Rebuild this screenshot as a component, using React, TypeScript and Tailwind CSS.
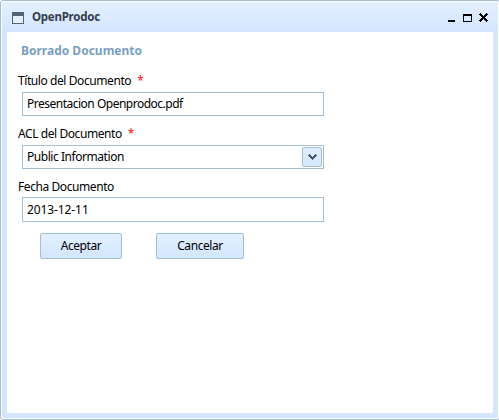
import type { ReactNode } from "react";

function Label({ children, required = false, className }: { children: string; required?: boolean; className: string }) {
  return (
    <div className={`flex h-4 items-center gap-[6px] pl-[11px] leading-4 tracking-[-0.42px] ${className}`}>
      <span>{children}</span>
      {required && <RequiredMark />}
    </div>
  );
}

function RequiredMark() {
  return <span className="font-['Open_Sans',sans-serif] text-[12px] leading-4 text-[#ff0000]">*</span>;
}

function Field({ children, className }: { children: ReactNode; className: string }) {
  return (
    <div className={`ml-[15px] flex w-[302px] items-center justify-between border border-[#a4bed4] bg-white pr-px pl-1 ${className}`}>
      {children}
    </div>
  );
}

function Button({ children, className }: { children: string; className: string }) {
  return (
    <button className={`h-[26px] rounded-[2px] border border-[#a4bed4] bg-linear-to-b from-[#e2efff] to-[#d3e7ff] tracking-[-0.42px] ${className}`}>
      {children}
    </button>
  );
}

export default function App() {
  return (
    <div className="h-[420px] w-[499px] overflow-hidden bg-white font-['Noto_Sans','Open_Sans',sans-serif] text-[12px] text-black">
      <div className="flex h-[420px] w-[500px] flex-col rounded-[3px] border border-[#a4bed4] p-px">
        <div className="flex grow flex-col rounded-[2px] bg-[#d3e5ff] px-[5px] pb-[5px]">
          <header className="-mx-[5px] flex h-[30px] shrink-0 items-center rounded-t-[2px] bg-linear-to-b from-[#e4f0ff] to-[#d3e5ff] pr-[10px] pl-[10px]">
            <svg width="12" height="12" viewBox="0 0 12 12" className="mt-[2px]" shapeRendering="crispEdges">
              <path d="M0 0h12v12H0z" fill="#566471" />
              <path d="M1 4h10v7H1z" fill="#e6f0fc" />
            </svg>
            <span className="ml-2 text-[11.5px] font-bold leading-4 tracking-[-0.25px] text-[#34404b]">OpenProdoc</span>
            <svg width="40" height="10" viewBox="0 0 40 10" className="mt-[2px] ml-auto" shapeRendering="crispEdges">
              <path d="M0 7h7v2H0z" fill="#000" />
              <path d="M15 1h9v8h-9zM16 3v5h7V3z" fill="#000" fillRule="evenodd" />
              <path d="M32 0h1v1h1v1h1v1h1V2h1V1h1V0h1v1h1v1h-1v1h-1v1h-1v1h1v1h1v1h1v1h-1v1h-1V8h-1V7h-1V6h-1v1h-1v1h-1v1h-1V8h-1V7h1V6h1V5h1V4h-1V3h-1V2h-1V1h1z" fill="#000" />
            </svg>
          </header>
          <main className="grow bg-white pt-[11px]">
            <h1 className="ml-[14px] text-[12px] font-bold leading-4 text-[#7a9fc2]">Borrado Documento</h1>
            <Label required className="mt-[14px]">Título del Documento</Label>
            <Field className="mt-[3px] h-6"><span className="tracking-[-0.5px]">Presentacion Openprodoc.pdf</span></Field>
            <Label required className="mt-[10px]">ACL del Documento</Label>
            <Field className="mt-[3px] h-6">
              <span className="tracking-[-0.45px]">Public Information</span>
              <button className="flex size-5 items-center justify-center rounded-[2px] border border-[#a4bed4] bg-linear-to-b from-[#e2efff] to-[#d3e7ff]">
                <svg width="9" height="6" viewBox="0 0 9 6" shapeRendering="crispEdges">
                  <path d="M1 0h1v1h1v1h1v1h1V2h1V1h1V0h1v1h1v1H8v1H7v1H6v1H5v1H4V5H3V4H2V3H1V2H0V1h1z" fill="#4b5a67" />
                </svg>
              </button>
            </Field>
            <Label className="mt-[10px]">Fecha Documento</Label>
            <Field className="mt-[2px] h-[25px]"><span className="tracking-[-0.1px]">2013-12-11</span></Field>
            <div className="mt-[11px] ml-[33px] flex gap-[34px]">
              <Button className="w-[82px]">Aceptar</Button>
              <Button className="w-[88px]">Cancelar</Button>
            </div>
          </main>
        </div>
      </div>
    </div>
  );
}
